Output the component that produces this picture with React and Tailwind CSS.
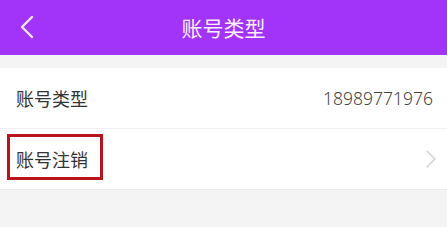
import React from "react"

export default function App() {
  return (
    <div
      className="w-[447px] h-[227px] bg-[#f4f4f4] overflow-hidden"
      style={{ fontFamily: '"Noto Sans CJK SC", "Noto Sans", sans-serif' }}
    >
      {/* Header */}
      <div className="relative h-[55px] bg-[#a234fa] flex items-center justify-center">
        <svg
          className="absolute left-[18px] top-[15px]"
          width="18"
          height="24"
          viewBox="0 0 18 24"
          fill="none"
        >
          <path d="M14 2 L4 12 L14 22" stroke="#fbe6ff" strokeWidth="2.4" strokeLinecap="round" strokeLinejoin="round" />
        </svg>
        <span className="text-[21px] text-[#fdeefe] leading-none">账号类型</span>
      </div>

      <div className="h-[13px]" />

      {/* Rows */}
      <div className="bg-white">
        <div className="h-[61px] flex items-center justify-between pl-[16px] pr-[14px] border-b border-[#efefef]">
          <span className="text-[18px] text-[#333]">账号类型</span>
          <span className="text-[17.5px] text-[#444] font-light" style={{ fontFamily: '"Noto Sans", sans-serif' }}>18989771976</span>
        </div>
        <div className="relative h-[61px] flex items-center justify-between pl-[16px] pr-[10px] border-b border-[#ececec]">
          <span className="text-[18px] text-[#333]">账号注销</span>
          <svg width="12" height="20" viewBox="0 0 12 20" fill="none">
            <path d="M2 2 L10 10 L2 18" stroke="#d2d2d2" strokeWidth="1.5" strokeLinecap="round" strokeLinejoin="round" />
          </svg>
          <div className="absolute left-[7px] top-[5px] w-[96px] h-[46px] border-[3px] border-[#b8141c]" />
        </div>
      </div>
    </div>
  )
}
